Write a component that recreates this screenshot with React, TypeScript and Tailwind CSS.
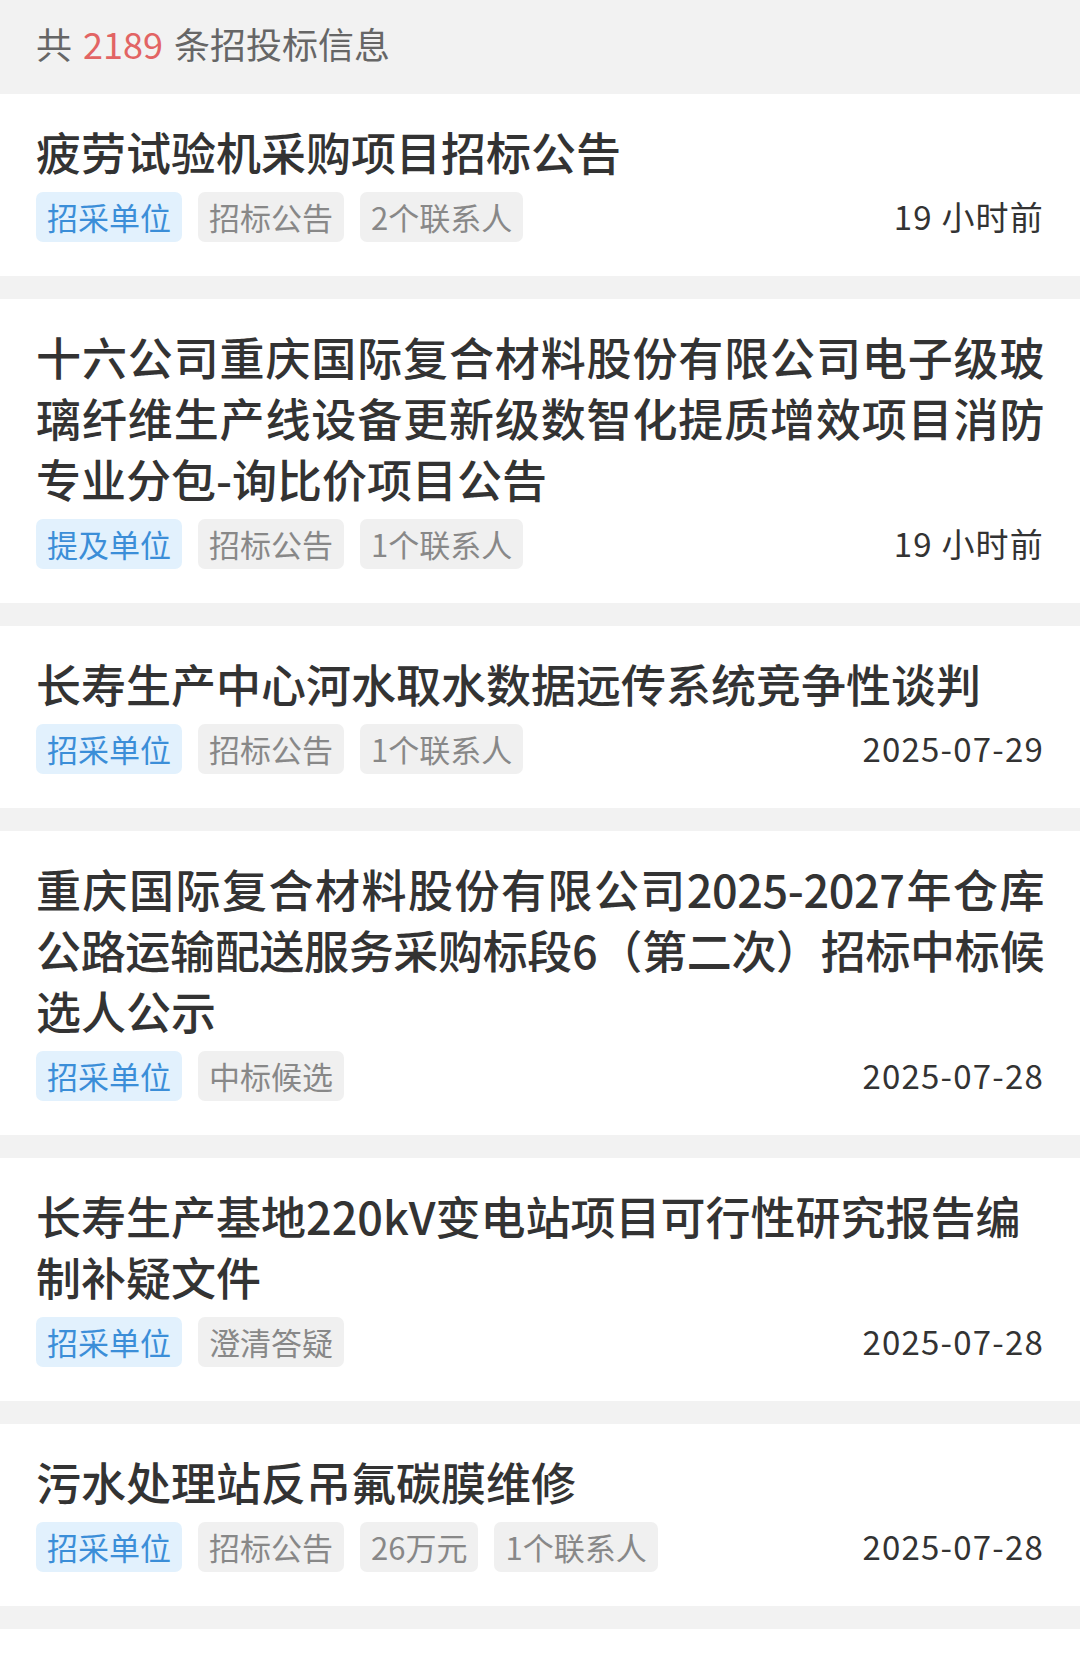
import React from 'react';

type Tag = { text: string; blue?: boolean };
type Item = { lines: { text: string; fill?: boolean }[]; tags: Tag[]; time: string };

const items: Item[] = [
  {
    lines: [{ text: '疲劳试验机采购项目招标公告' }],
    tags: [{ text: '招采单位', blue: true }, { text: '招标公告' }, { text: '2个联系人' }],
    time: '19 小时前',
  },
  {
    lines: [
      { text: '十六公司重庆国际复合材料股份有限公司电子级玻', fill: true },
      { text: '璃纤维生产线设备更新级数智化提质增效项目消防', fill: true },
      { text: '专业分包-询比价项目公告' },
    ],
    tags: [{ text: '提及单位', blue: true }, { text: '招标公告' }, { text: '1个联系人' }],
    time: '19 小时前',
  },
  {
    lines: [{ text: '长寿生产中心河水取水数据远传系统竞争性谈判' }],
    tags: [{ text: '招采单位', blue: true }, { text: '招标公告' }, { text: '1个联系人' }],
    time: '2025-07-29',
  },
  {
    lines: [
      { text: '重庆国际复合材料股份有限公司2025-2027年仓库', fill: true },
      { text: '公路运输配送服务采购标段6（第二次）招标中标候', fill: true },
      { text: '选人公示' },
    ],
    tags: [{ text: '招采单位', blue: true }, { text: '中标候选' }],
    time: '2025-07-28',
  },
  {
    lines: [{ text: '长寿生产基地220kV变电站项目可行性研究报告编' }, { text: '制补疑文件' }],
    tags: [{ text: '招采单位', blue: true }, { text: '澄清答疑' }],
    time: '2025-07-28',
  },
  {
    lines: [{ text: '污水处理站反吊氟碳膜维修' }],
    tags: [{ text: '招采单位', blue: true }, { text: '招标公告' }, { text: '26万元' }, { text: '1个联系人' }],
    time: '2025-07-28',
  },
];

function TenderCard({ item }: { item: Item }) {
  return (
    <div className="bg-white px-[36px] pt-[27px] pb-[34px]">
      {/* title */}
      <div className="text-[45px] leading-[61px] font-medium text-[#333333]">
        {item.lines.map((l, i) => (
          <div
            key={i}
            className={
              l.fill
                ? 'whitespace-nowrap tracking-[-0.4px] text-justify [text-align-last:justify]'
                : 'whitespace-nowrap'
            }
          >
            {l.text}
          </div>
        ))}
      </div>
      {/* tags + time */}
      <div className="mt-[10px] flex items-center justify-between">
        <div className="flex gap-[16px]">
          {item.tags.map((t, i) => (
            <span
              key={i}
              className={
                t.blue
                  ? 'h-[50px] px-[11px] rounded-[7px] flex items-center text-[31px] bg-[#e2f1fd] text-[#3b8ed8]'
                  : 'h-[50px] px-[11px] rounded-[7px] flex items-center text-[31px] bg-[#f0f0f0] text-[#888888]'
              }
            >
              {t.text}
            </span>
          ))}
        </div>
        <span className="text-[33px] text-[#333333] tracking-[1.2px]">{item.time}</span>
      </div>
    </div>
  );
}

export default function App() {
  return (
    <div className="w-[1080px] bg-[#f2f2f2] font-['Noto_Sans_CJK_SC',sans-serif]">
      {/* header count */}
      <div className="h-[94px] px-[36px] pb-[8px] flex items-center text-[36px] text-[#666666]">
        <span>共</span>
        <span className="ml-[11px] text-[#e26464]">2189</span>
        <span className="ml-[11px]">条招投标信息</span>
      </div>

      <div className="flex flex-col gap-[23px]">
        {items.map((it, i) => (
          <TenderCard key={i} item={it} />
        ))}
        <div className="bg-white h-[120px]" />
      </div>
    </div>
  );
}
